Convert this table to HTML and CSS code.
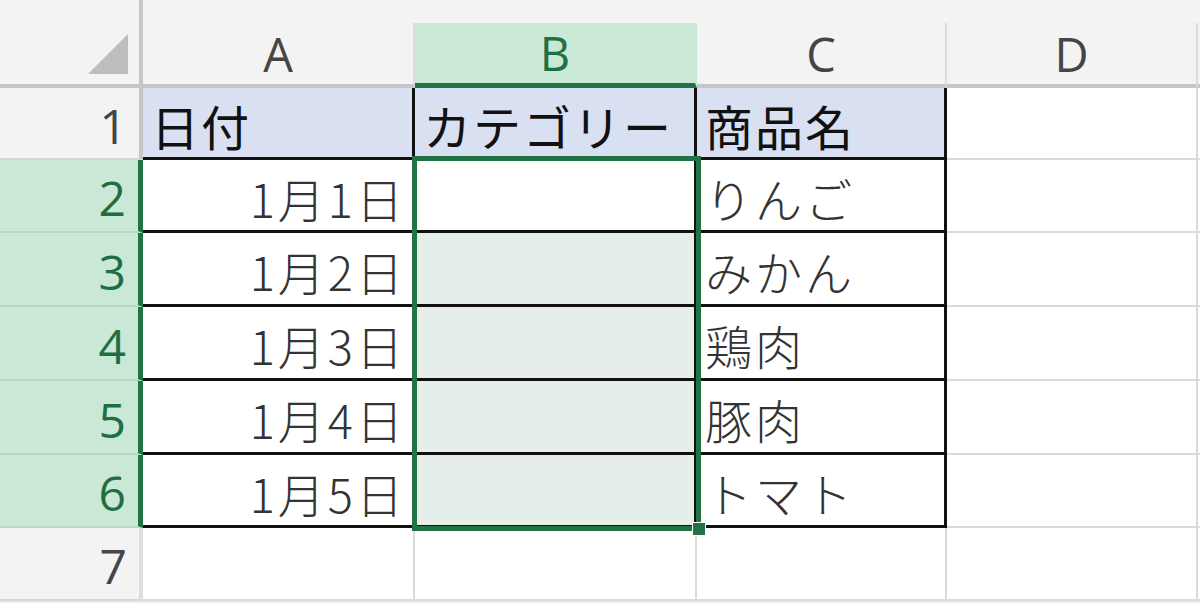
FILE: index.html
```html
<!DOCTYPE html>
<html lang="ja">
<head>
<meta charset="utf-8">
<title>Sheet</title>
<link rel="stylesheet" href="styles.css">
</head>
<body>
<div class="sheet">
  <div class="corner">
    <svg class="corner-tri" width="40" height="40" viewBox="0 0 40 40"><polygon points="0,40 40,40 40,0" fill="#bdbdbd"/></svg>
  </div>
  <div class="strip"></div>

  <div class="colhead">A</div>
  <div class="colhead sel">B</div>
  <div class="colhead">C</div>
  <div class="colhead">D</div>
  <div class="colhead edge"></div>

  <div class="rowhead">1</div>
  <div class="cell t hdr">日付</div>
  <div class="cell t hdr">カテゴリー</div>
  <div class="cell t hdr">商品名</div>
  <div class="cell"></div>
  <div class="cell edge"></div>

  <div class="rowhead sel">2</div>
  <div class="cell t num">1月1日</div>
  <div class="cell t active"></div>
  <div class="cell t">りんご</div>
  <div class="cell"></div>
  <div class="cell edge"></div>

  <div class="rowhead sel">3</div>
  <div class="cell t num">1月2日</div>
  <div class="cell t range"></div>
  <div class="cell t">みかん</div>
  <div class="cell"></div>
  <div class="cell edge"></div>

  <div class="rowhead sel">4</div>
  <div class="cell t num">1月3日</div>
  <div class="cell t range"></div>
  <div class="cell t">鶏肉</div>
  <div class="cell"></div>
  <div class="cell edge"></div>

  <div class="rowhead sel">5</div>
  <div class="cell t num">1月4日</div>
  <div class="cell t range"></div>
  <div class="cell t">豚肉</div>
  <div class="cell"></div>
  <div class="cell edge"></div>

  <div class="rowhead sel">6</div>
  <div class="cell t num">1月5日</div>
  <div class="cell t range"></div>
  <div class="cell t">トマト</div>
  <div class="cell"></div>
  <div class="cell edge"></div>

  <div class="rowhead last">7</div>
  <div class="cell"></div>
  <div class="cell"></div>
  <div class="cell"></div>
  <div class="cell"></div>
  <div class="cell edge"></div>

  <div class="bottom"></div>

  <div class="selection"></div>
  <div class="handle"></div>
</div>
</body>
</html>
```

FILE: styles.css
```css
* { box-sizing: border-box; }

html, body {
  margin: 0;
  padding: 0;
  background: #ffffff;
  overflow: hidden;
}

.sheet {
  position: relative;
  width: 1200px;
  height: 603px;
  display: grid;
  grid-template-columns: 143px 272px 282px 250px 251px 2px;
  grid-template-rows: 23px 65px 72px 73px 74px 74px 74px 73px 73px 2px;
  font-family: "Noto Sans CJK JP", "Noto Sans", sans-serif;
}

.corner {
  grid-column: 1;
  grid-row: 1 / span 2;
  background: #f3f3f3;
  border-right: 4px solid #c6c6c6;
  border-bottom: 4px solid #c6c6c6;
  display: flex;
  justify-content: flex-end;
  align-items: flex-end;
  padding: 0 11px 10px 0;
}

.corner-tri { display: block; }

.strip {
  grid-column: 2 / span 5;
  grid-row: 1;
  background: #f3f3f3;
}

.colhead {
  grid-row: 2;
  background: #f3f3f3;
  border-right: 2px solid #dcdcdc;
  border-bottom: 4px solid #c6c6c6;
  display: flex;
  align-items: center;
  justify-content: center;
  font-family: "Open Sans", "Noto Sans", sans-serif;
  font-size: 47px;
  color: #454545;
}

.colhead.sel {
  background: #c9e8d5;
  color: #1e7145;
  border-right: 2px solid #c9e8d5;
  border-bottom: 5px solid #217346;
}

.colhead.edge {
  border-right: none;
}

.rowhead {
  background: #f3f3f3;
  border-right: 4px solid #c6c6c6;
  border-bottom: 2px solid #d6d6d6;
  display: flex;
  align-items: center;
  justify-content: flex-end;
  padding: 4px 12px 0 0;
  font-family: "Open Sans", "Noto Sans", sans-serif;
  font-size: 48px;
  color: #454545;
}

.rowhead.sel {
  background: #c9e8d5;
  color: #1e6e42;
  border-right: 5px solid #217346;
  border-bottom: 2px solid #b3dbc3;
}

.rowhead.last {
  border-right: 4px solid #dedede;
  border-bottom: 2px solid #d6d6d6;
}

.cell {
  background: #ffffff;
  border-right: 2px solid #dadada;
  border-bottom: 2px solid #dadada;
  display: flex;
  align-items: center;
  padding: 4px 8px 0 8px;
  font-size: 47px;
  font-weight: 300;
  letter-spacing: 3px;
  color: #333333;
  white-space: nowrap;
  overflow: hidden;
}

.cell.t {
  border-right: 3px solid #111111;
  border-bottom: 3px solid #111111;
}

.cell.hdr {
  background: #d9e0f2;
  font-weight: 400;
  color: #111111;
  font-size: 48px;
  letter-spacing: 2px;
}

.cell.num {
  justify-content: flex-end;
  padding-right: 6px;
}

.cell.range {
  background: #e6eee9;
}

.cell.edge {
  border-right: none;
}

.bottom {
  grid-column: 1 / span 6;
  background: #ebebeb;
}

.selection {
  position: absolute;
  z-index: 2;
  left: 412px;
  top: 156px;
  width: 289px;
  height: 375px;
  border: 5px solid #217346;
  pointer-events: none;
}

.handle {
  position: absolute;
  z-index: 3;
  left: 692px;
  top: 522px;
  width: 14px;
  height: 14px;
  background: #217346;
  border: 1px solid #ffffff;
}
```
